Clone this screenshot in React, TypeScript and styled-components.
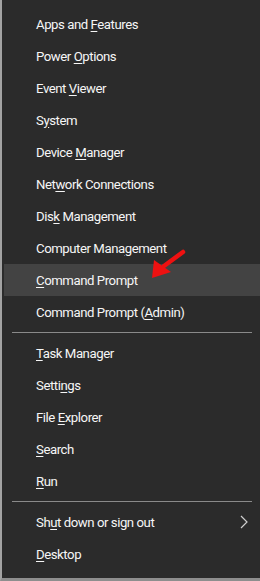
import styled, { createGlobalStyle } from "styled-components"

const GlobalStyle = createGlobalStyle`
    html, body {
        margin: 0;
        padding: 0;
        background: #2b2b2b;
    }
`

type Entry = { pre: string; key: string; post: string; active?: boolean; sub?: boolean }

const groups: Entry[][] = [
    [
        { pre: "Apps and ", key: "F", post: "eatures" },
        { pre: "Power ", key: "O", post: "ptions" },
        { pre: "Event ", key: "V", post: "iewer" },
        { pre: "S", key: "y", post: "stem" },
        { pre: "Device ", key: "M", post: "anager" },
        { pre: "Net", key: "w", post: "ork Connections" },
        { pre: "Dis", key: "k", post: " Management" },
        { pre: "Computer Mana", key: "g", post: "ement" },
        { pre: "", key: "C", post: "ommand Prompt", active: true },
        { pre: "Command Prompt (", key: "A", post: "dmin)" },
    ],
    [
        { pre: "", key: "T", post: "ask Manager" },
        { pre: "Setti", key: "n", post: "gs" },
        { pre: "File ", key: "E", post: "xplorer" },
        { pre: "", key: "S", post: "earch" },
        { pre: "", key: "R", post: "un" },
    ],
    [
        { pre: "Sh", key: "u", post: "t down or sign out", sub: true },
        { pre: "", key: "D", post: "esktop" },
    ],
]

export default function App() {
    return (<>
        <GlobalStyle />
        <Menu>
            {groups.map((group, gi) => (
                <Group key={gi}>
                    {gi > 0 && <Separator />}
                    {group.map((e) => (
                        <Item key={e.pre + e.key + e.post} $active={e.active}>
                            <span>{e.pre}<Key>{e.key}</Key>{e.post}</span>
                            {e.sub && <Chevron viewBox="0 0 8 14">
                                <path d="M1 1 L7 7 L1 13" fill="none" stroke="#cfcfcf" strokeWidth="1.2" />
                            </Chevron>}
                        </Item>
                    ))}
                </Group>
            ))}
            <Arrow viewBox="0 0 40 34">
                <path d="M35 4 L16 18" stroke="#ee1111" strokeWidth="4.5" strokeLinecap="round" />
                <path d="M4 30 L6 12 L23 24 Z" fill="#ee1111" />
            </Arrow>
        </Menu>
    </>)
}

const Menu = styled.div`
    position: relative;
    box-sizing: border-box;
    width: 260px;
    height: 581px;
    padding: 8px 0 8px 2px;
    background: #2b2b2b;
    border-left: 2px solid #a3a3a3;
    border-bottom: 3px solid #8e8e8e;
    font-family: Roboto, "Noto Sans", sans-serif;
    font-size: 13.2px;
    letter-spacing: -0.45px;
    color: #f6f6f6;
`

const Group = styled.div`
    display: flex;
    flex-direction: column;
`

const Separator = styled.div`
    height: 1px;
    margin: 4px 8px 4px 8px;
    background: #8a8a8a;
`

const Item = styled.div<{ $active?: boolean }>`
    display: flex;
    align-items: center;
    justify-content: space-between;
    height: 32px;
    padding: 0 12px 0 32px;
    background: ${(p) => (p.$active ? "#434343" : "transparent")};
    white-space: nowrap;
`

const Key = styled.span`
    text-decoration: underline;
    text-underline-offset: 2px;
`

const Chevron = styled.svg`
    width: 8px;
    height: 14px;
`

const Arrow = styled.svg`
    position: absolute;
    left: 146px;
    top: 248px;
    width: 40px;
    height: 34px;
`
